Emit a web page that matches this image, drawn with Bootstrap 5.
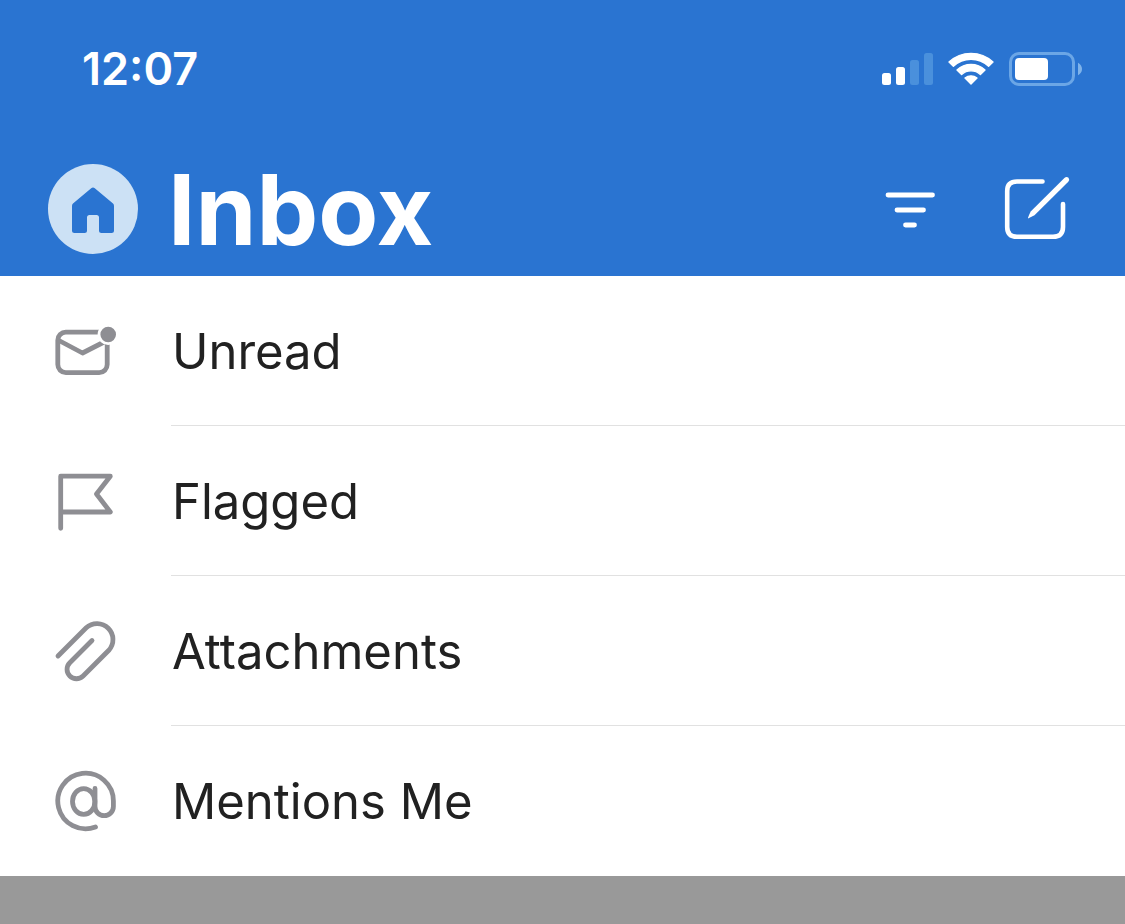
<!DOCTYPE html>
<html lang="en">
<head>
<meta charset="utf-8">
<meta name="viewport" content="width=device-width, initial-scale=1">
<title>Inbox</title>
<link href="https://cdn.jsdelivr.net/npm/bootstrap@5.3.0/dist/css/bootstrap.min.css" rel="stylesheet">
<style>
  body { font-family: Inter, "Liberation Sans", sans-serif; background: #999; color: #212121; }
  svg { display: block; flex: none; }
  .app-header { background: #2a74d1; color: #fff; }
  .status-bar { height: 138px; padding: 0 42px 0 82px; }
  .status-icons { gap: 15px; }
  .clock { font-size: 45px; font-weight: 600; line-height: 48px; }
  .title-bar { height: 138px; padding: 4px 54px 0 48px; }
  .page-title { font-size: 98px; font-weight: 700; line-height: 120px; margin-left: 30px; padding-top: 2px; }
  .header-actions { gap: 66px; }
  .filter-item { padding-left: 54px; color: #212121; font-size: 49px; line-height: 60px; }
  .filter-item svg { color: #8e8e93; margin-right: 53px; }
  .filter-label { height: 150px; padding: 2px 0 0 1px; border-bottom: 1px solid #e1e1e1; }
  li:last-child .filter-label { border-bottom-color: transparent; }
</style>
</head>
<body class="min-vh-100">
<header class="app-header">
  <div class="status-bar d-flex align-items-center justify-content-between">
    <span class="clock">12:07</span>
    <div class="status-icons d-flex align-items-center">
      <svg width="51" height="34" viewBox="0 0 51 34" fill="#fff" aria-hidden="true">
        <rect y="21" width="9" height="12" rx="2.5"/>
        <rect x="14" y="15" width="9" height="18" rx="2.5"/>
        <rect x="28" y="8" width="9" height="25" rx="2.5" fill="#4a90dc"/>
        <rect x="42" y="1" width="9" height="32" rx="2.5" fill="#4a90dc"/>
      </svg>
      <svg width="46" height="34" viewBox="0 0 46 34" fill="#fff" stroke="#fff" stroke-width="1.4" stroke-linejoin="round" aria-hidden="true">
        <path d="M1 10A32.300 32.300 0 0 1 45 10L40.600 14.300A25.500 25.500 0 0 0 5.400 14.300Z"/>
        <path d="M9 18A20.700 20.700 0 0 1 37 18L32.400 22.500A14 14 0 0 0 13.600 22.500Z"/>
        <path d="M17 26A9.500 9.500 0 0 1 29 26L23 32Z"/>
      </svg>
      <svg width="74" height="34" viewBox="0 0 74 34" fill="#fff" aria-hidden="true">
        <rect x="1.5" y="1.5" width="63" height="31" rx="8.5" fill="none" stroke="#6ba6e6" stroke-width="3"/>
        <rect x="6" y="6" width="33" height="22" rx="4"/>
        <path d="M69 10.7Q73 13 73 17Q73 21 69 23.3Z" fill="#7fb3ea"/>
      </svg>
    </div>
  </div>
  <div class="title-bar d-flex align-items-center">
    <button type="button" class="btn p-0 border-0 rounded-circle" aria-label="Home">
      <svg width="90" height="90" viewBox="0 0 90 90" aria-hidden="true">
        <circle cx="45" cy="45" r="45" fill="#cce1f5"/>
        <path fill="#2a74d1" d="M43.2 24.2Q45 22.8 46.8 24.2L65 39.6Q66 40.5 66 42V66.5Q66 69 63.5 69H53.5Q51 69 51 66.5V53.5Q51 51 48.5 51H41.5Q39 51 39 53.5V66.5Q39 69 36.5 69H26.5Q24 69 24 66.5V42Q24 40.5 25 39.6Z"/>
      </svg>
    </button>
    <h1 class="page-title mb-0">Inbox</h1>
    <div class="header-actions d-flex align-items-center ms-auto">
      <button type="button" class="btn p-0 border-0" aria-label="Filter">
        <svg width="52" height="40" viewBox="0 0 52 40" stroke="#fff" stroke-width="4.8" stroke-linecap="round" aria-hidden="true">
          <path d="M3 6H47.500M12 21H38.500M20.500 36H29.500"/>
        </svg>
      </button>
      <button type="button" class="btn p-0 border-0" aria-label="New message">
        <svg width="68" height="68" viewBox="0 0 68 68" fill="none" stroke="#fff" stroke-width="4.600" stroke-linecap="round" aria-hidden="true">
          <path d="M39.500 6.500H14Q4.200 6.500 4.200 16V52Q4.200 61.800 14 61.800H50Q60 61.800 60 52V29"/>
          <path d="M61.400 2.900Q63.500 1 65.500 2.700Q67 4.700 65.300 6.800L31.500 40.300L25 43.500Q24.600 42.900 27.700 36.500Z" fill="#fff" stroke="none"/>
        </svg>
      </button>
    </div>
  </div>
</header>
<main class="bg-white">
  <ul class="list-unstyled mb-0">
    <li>
      <a href="#unread" class="filter-item d-flex align-items-center text-decoration-none">
        <svg width="64" height="64" viewBox="0 0 64 64" fill="none" stroke="currentColor" stroke-width="4.8" aria-hidden="true">
          <rect x="3.8" y="13.200" width="49.4" height="40.400" rx="8"/>
          <path d="M4 21L28.500 34L53 21.500" stroke-linejoin="round"/>
          <circle cx="54.200" cy="15.500" r="9.200" fill="currentColor" stroke="#fff" stroke-width="2.8"/>
        </svg>
        <span class="filter-label d-flex align-items-center flex-grow-1">Unread</span>
      </a>
    </li>
    <li>
      <a href="#flagged" class="filter-item d-flex align-items-center text-decoration-none">
        <svg width="64" height="64" viewBox="0 0 64 64" fill="none" stroke="currentColor" stroke-width="4.8" stroke-linecap="round" stroke-linejoin="round" aria-hidden="true">
          <path d="M6.700 59.300V7.200H56.300L42.500 25L56.300 43H6.700"/>
        </svg>
        <span class="filter-label d-flex align-items-center flex-grow-1">Flagged</span>
      </a>
    </li>
    <li>
      <a href="#attachments" class="filter-item d-flex align-items-center text-decoration-none">
        <svg width="64" height="64" viewBox="0 0 64 64" fill="none" stroke="currentColor" stroke-width="4.8" stroke-linecap="round" aria-hidden="true">
          <path d="M4 37L32.200 8.700A16 16 0 0 1 54.800 31.300L29.100 57A9.400 9.400 0 0 1 15.800 43.700L38 21.500"/>
        </svg>
        <span class="filter-label d-flex align-items-center flex-grow-1">Attachments</span>
      </a>
    </li>
    <li>
      <a href="#mentions" class="filter-item d-flex align-items-center text-decoration-none">
        <svg width="64" height="64" viewBox="0 0 64 64" fill="none" stroke="currentColor" stroke-width="4.8" stroke-linecap="round" aria-hidden="true">
          <path d="M41.500 58A27.800 27.800 0 1 1 59.400 32V37.500A9.200 9.200 0 0 1 41 37.500V19.500"/>
          <ellipse cx="29.700" cy="32.500" rx="11.200" ry="12.800"/>
        </svg>
        <span class="filter-label d-flex align-items-center flex-grow-1">Mentions Me</span>
      </a>
    </li>
  </ul>
</main>
<script src="https://cdn.jsdelivr.net/npm/bootstrap@5.3.0/dist/js/bootstrap.bundle.min.js"></script>
</body>
</html>
